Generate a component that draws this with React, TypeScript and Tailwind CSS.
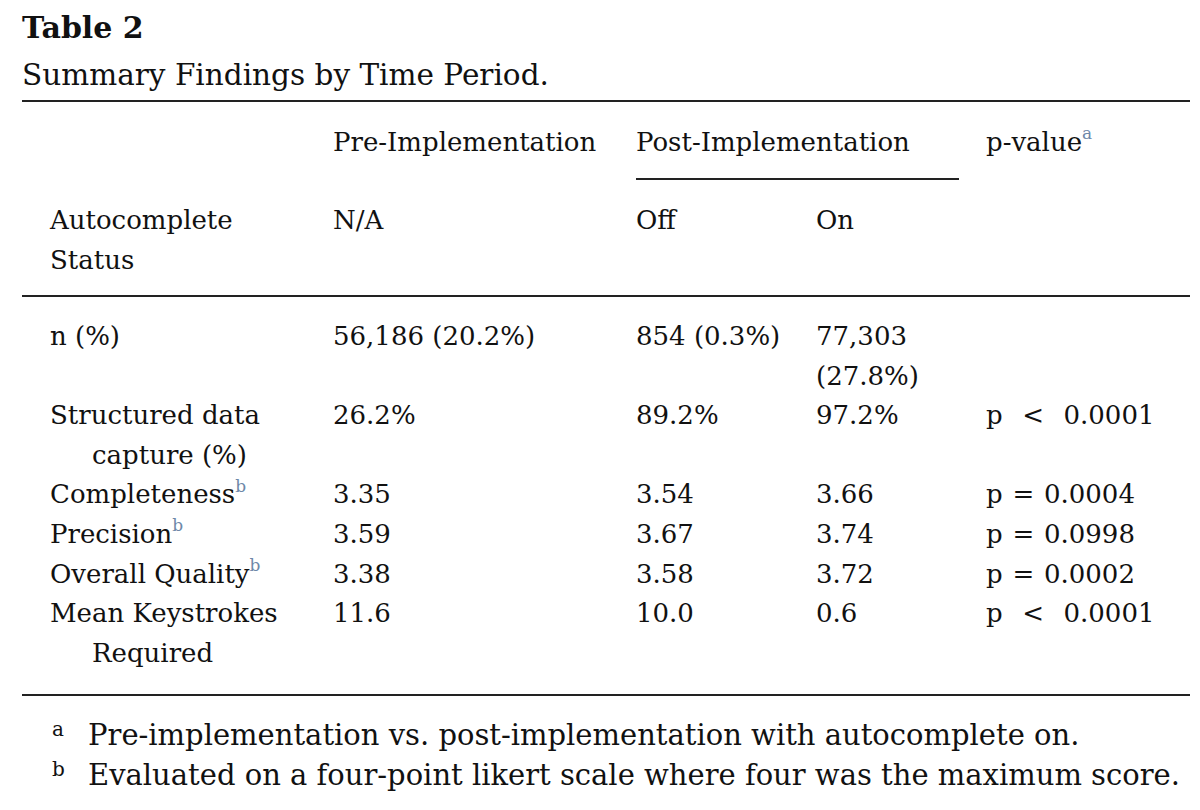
import React from "react";

const Sup = ({ c }: { c: string }) => (
  <sup className="text-[17px] text-[#6e88a8] relative top-[-2px] align-super leading-none">{c}</sup>
);

export default function App() {
  const serif = { fontFamily: '"DejaVu Serif", "Liberation Serif", serif' };
  return (
    <div className="w-[1200px] h-[810px] bg-white text-[#111] overflow-hidden" style={serif}>
      <div className="ml-[22px] w-[1168px]">
        <div className="pt-[8px] text-[30px] font-bold leading-[40px]">Table 2</div>
        <div className="text-[29.5px] leading-[40px] mt-[7px] whitespace-nowrap">Summary Findings by Time Period.</div>
        <div className="h-[2px] bg-[#222] mt-[5px]" />

        {/* Header */}
        <div className="text-[26px] leading-[40px]">
          <div className="grid grid-cols-[311px_303px_350px_204px] pt-[20px]">
            <div />
            <div>Pre-Implementation</div>
            <div>
              <div>Post-Implementation</div>
              <div className="h-[2px] bg-[#222] w-[323px] mt-[16px]" />
            </div>
            <div>
              p-value<Sup c="a" />
            </div>
          </div>
          <div className="grid grid-cols-[311px_303px_180px_170px_204px] pt-[20px] pb-[15px]">
            <div className="pl-[28px]">
              <div>Autocomplete</div>
              <div>Status</div>
            </div>
            <div>N/A</div>
            <div>Off</div>
            <div>On</div>
            <div />
          </div>
        </div>
        <div className="h-[2px] bg-[#222]" />

        {/* Body */}
        <div className="text-[26px] leading-[39.6px] pt-[20px] pb-[21px]">
          {[
            { l1: <>n (%)</>, l2: null, a: "56,186 (20.2%)", b: "854 (0.3%)", c: <><div>77,303</div><div>(27.8%)</div></>, p: "" },
            { l1: <>Structured data</>, l2: "capture (%)", a: "26.2%", b: "89.2%", c: "97.2%", p: "p \u00a0<\u00a0 0.0001" },
            { l1: <>Completeness<Sup c="b" /></>, l2: null, a: "3.35", b: "3.54", c: "3.66", p: "p = 0.0004" },
            { l1: <>Precision<Sup c="b" /></>, l2: null, a: "3.59", b: "3.67", c: "3.74", p: "p = 0.0998" },
            { l1: <>Overall Quality<Sup c="b" /></>, l2: null, a: "3.38", b: "3.58", c: "3.72", p: "p = 0.0002" },
            { l1: <>Mean Keystrokes</>, l2: "Required", a: "11.6", b: "10.0", c: "0.6", p: "p \u00a0<\u00a0 0.0001" },
          ].map((r, i) => (
            <div key={i} className="grid grid-cols-[311px_303px_180px_170px_204px]">
              <div className="pl-[28px]">
                <div className="whitespace-nowrap">{r.l1}</div>
                {r.l2 && <div className="pl-[42px]">{r.l2}</div>}
              </div>
              <div>{r.a}</div>
              <div>{r.b}</div>
              <div>{r.c}</div>
              <div className="whitespace-pre [word-spacing:1.5px]">{r.p}</div>
            </div>
          ))}
        </div>
        <div className="h-[2px] bg-[#222]" />

        {/* Footnotes */}
        <div className="text-[29px] leading-[40px] pt-[19px] whitespace-nowrap">
          <div className="flex">
            <div className="w-[66px] pl-[30px] text-[20px] leading-[28px]">a</div>
            <div>Pre-implementation vs. post-implementation with autocomplete on.</div>
          </div>
          <div className="flex">
            <div className="w-[66px] pl-[30px] text-[20px] leading-[28px]">b</div>
            <div>Evaluated on a four-point likert scale where four was the maximum score.</div>
          </div>
        </div>
      </div>
    </div>
  );
}
